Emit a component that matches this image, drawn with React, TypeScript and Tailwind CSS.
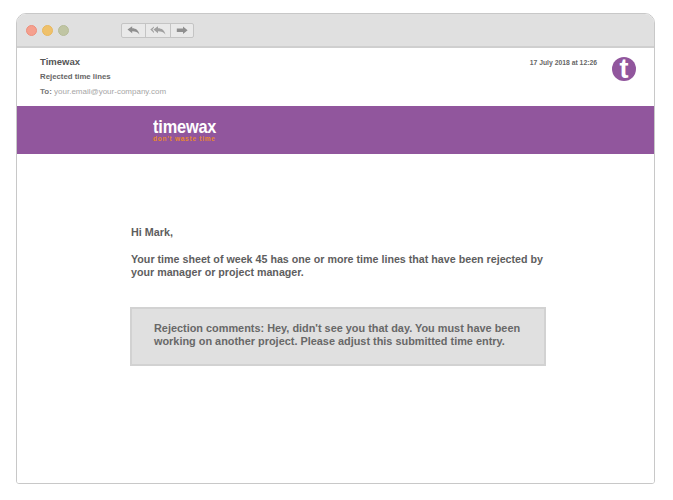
const sans = { fontFamily: '"Liberation Sans", Arial, sans-serif' };

function TitleBar() {
  return (
    <div className="flex h-[34px] shrink-0 items-center border-b-2 border-[#cfcfcf] bg-[#e0e0e0] pl-[9px]">
      <div className="flex gap-[5px]">
        <span className="h-[11px] w-[11px] rounded-full border border-[#ee8f7c] bg-[#f5a08e]" />
        <span className="h-[11px] w-[11px] rounded-full border border-[#e9b85e] bg-[#efc16b]" />
        <span className="h-[11px] w-[11px] rounded-full border border-[#b6bc98] bg-[#c0c5a3]" />
      </div>
      <div className="ml-[52px] flex h-[15px] w-[73px] rounded-[2px] border border-[#c4c4c4] bg-[#e9e9e9]">
        <div className="flex w-[24px] items-center justify-center border-r border-[#c4c4c4]">
          <svg width="13" height="9" viewBox="0 0 13 9" fill="#8f8f8f">
            <path d="M0.5 3.6 5.2 0.2V2.2C9 2.2 11.6 4.2 12.4 8.4 10.8 6.2 8.6 5.2 5.2 5.2V7.2Z" />
          </svg>
        </div>
        <div className="flex w-[25px] items-center justify-center border-r border-[#c4c4c4]">
          <svg width="16" height="9" viewBox="0 0 16 9" fill="#a0a0a0">
            <path d="M0.3 3.6 4 0.4V1.6L2.4 3.6 4 5.8V7Z" />
            <path d="M3.4 3.6 8 0.2V2.2C11.8 2.2 14.6 4.2 15.4 8.4 13.8 6.2 11.4 5.2 8 5.2V7.2Z" />
          </svg>
        </div>
        <div className="flex flex-1 items-center justify-center">
          <svg width="12" height="9" viewBox="0 0 12 9" fill="#8f8f8f">
            <path d="M11.6 4.3 7 0.6V2.6H0.8V6H7V8Z" />
          </svg>
        </div>
      </div>
    </div>
  );
}

function MailHeader() {
  return (
    <div className="flex h-[58px] shrink-0 justify-between bg-white pl-[23px] pr-[18px]">
      <div>
        <p className="mt-[7px] text-[9.5px] leading-[13px] font-bold text-[#555]">Timewax</p>
        <p className="mt-[3px] text-[7.8px] leading-[11px] font-bold text-[#666]">Rejected time lines</p>
        <p className="mt-[4px] text-[8px] leading-[11px] text-[#a6a6a6]">
          <span className="font-bold text-[#777]">To:</span> your.email@your-company.com
        </p>
      </div>
      <div className="flex items-start">
        <p className="mt-[10px] text-[6.8px] leading-[10px] font-bold text-[#666]">17 July 2018 at 12:26</p>
        <div className="ml-[15px] mt-[9px] flex h-[24px] w-[24px] items-center justify-center rounded-full bg-[#91569d]">
          <span className="text-[27px] leading-none font-bold text-white">t</span>
        </div>
      </div>
    </div>
  );
}

function Banner() {
  return (
    <div className="h-[48px] shrink-0 bg-[#91569d] pl-[136px] pt-[12px]">
      <p className="origin-left scale-x-[0.86] text-[19px] leading-[17px] font-bold tracking-[-0.2px] text-white">timewax</p>
      <p className="mt-[1px] text-[6.5px] leading-[6px] font-bold tracking-[0.75px] text-[#e8892f]">don't waste time</p>
    </div>
  );
}

export default function App() {
  return (
    <div className="h-[500px] w-[673px] bg-white pl-[16px] pt-[13px]" style={sans}>
      <div className="flex h-[471px] w-[639px] flex-col overflow-hidden rounded-t-[10px] rounded-b-[3px] border border-[#c8c8c8]">
        <TitleBar />
        <MailHeader />
        <Banner />
        <div className="flex-1 bg-white pl-[113px] pt-[71px]">
          <p className="ml-[1px] text-[10.8px] leading-[14px] font-bold text-[#5e5e5e]">Hi Mark,</p>
          <p className="ml-[1px] mt-[14px] w-[420px] text-[10.7px] leading-[13px] font-bold text-[#5e5e5e]">
            Your time sheet of week 45 has one or more time lines that have been rejected by your manager or project manager.
          </p>
          <div className="mt-[28px] h-[59px] w-[416px] border-2 border-[#d2d2d2] bg-[#e0e0e0] pl-[22px] pt-[13px]">
            <p className="w-[372px] text-[10.9px] leading-[13px] font-bold text-[#686868]">
              Rejection comments: Hey, didn't see you that day. You must have been working on another project. Please adjust this submitted time entry.
            </p>
          </div>
        </div>
      </div>
    </div>
  );
}
